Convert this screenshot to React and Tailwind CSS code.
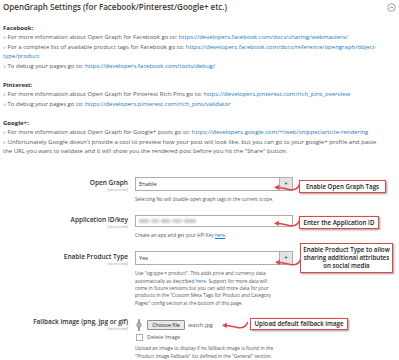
import React from 'react';

const Sel = ({ value }) => (
    <div className="flex h-[14px] w-[158px] border border-[#adadad] bg-white">
        <span className="flex-1 pl-[3px] text-[5.6px] leading-[12px] text-[#303030]">{value}</span>
        <span className="flex w-[13px] items-center justify-center border-l border-[#adadad] bg-[#e3e3e3] text-[4px] text-[#41362f]">▼</span>
    </div>
);

const Label = ({ title, className }) => (
    <div className={`w-[128px] shrink-0 text-right ${className}`}>
        <div className="text-[6.5px] font-semibold leading-[8px] text-[#303030] whitespace-nowrap">{title}</div>
        <div className="text-[3.8px] leading-[5px] text-[#999]">[store view]</div>
    </div>
);

const Callout = ({ className, children }) => (
    <div className={`absolute flex items-center justify-center border-[1.5px] border-[#e0454a] bg-white text-center text-[6.2px] font-semibold leading-[8px] text-[#222] shadow-[1px_1px_2px_rgba(0,0,0,0.4)] ${className}`}>
        {children}
    </div>
);

const Arrow = ({ className }) => (
    <svg className={`absolute ${className}`} width="26" height="9" viewBox="0 0 26 9">
        <path d="M25.5 1.5 C24 5.5, 20 7.5, 15 6.5 C11 5.8, 7 4.5, 4 4.5" fill="none" stroke="#e0454a" strokeWidth="1.5" strokeLinecap="round" />
        <polygon points="0,4.3 5,1.8 4.7,7" fill="#e0454a" />
    </svg>
);

const A = ({ children }) => <span className="text-[#1979c3]">{children}</span>;
const B = () => <span className="text-[#999]">» </span>;

export default function App() {
    return (
        <div className="relative h-[360px] w-[399px] overflow-hidden bg-white font-['Open_Sans',sans-serif]">
            {/* header */}
            <div className="flex items-center justify-between px-[3px] pt-[1px]">
                <h1 className="text-[8px] font-semibold leading-[12px] text-[#41362f]">
                    OpenGraph Settings (for Facebook/Pinterest/Google+ etc.)
                </h1>
                <svg width="9" height="9" viewBox="0 0 9 9" className="mr-[0px]">
                    <circle cx="4.5" cy="4.5" r="3.8" fill="none" stroke="#8a8a8a" strokeWidth="0.8" />
                    <path d="M2.8 5.4 L4.5 3.6 L6.2 5.4" fill="none" stroke="#6a6a6a" strokeWidth="0.8" />
                </svg>
            </div>

            {/* info text */}
            <div className="mt-[10.75px] pl-[3px] text-[6px] leading-[9.5px] text-[#555] whitespace-nowrap">
                <div className="font-bold text-[#303030]">Facebook:</div>
                <div><B />For more information about Open Graph for Facebook go to: <A>https://developers.facebook.com/docs/sharing/webmasters/</A></div>
                <div><B />For a complete list of available product tags for Facebook go to: <A>https://developers.facebook.com/docs/reference/opengraph/object-</A></div>
                <div><A>type/product</A></div>
                <div><B />To debug your pages go to: <A>https://developers.facebook.com/tools/debug/</A></div>
                <div className="h-[9.5px]" />
                <div className="font-bold text-[#303030]">Pinterest:</div>
                <div><B />For more information about Open Graph for Pinterest Rich Pins go to: <A>https://developers.pinterest.com/rich_pins_overview</A></div>
                <div><B />To debug your pages go to: <A>https://developers.pinterest.com/rich_pins/validator</A></div>
                <div className="h-[9.5px]" />
                <div className="font-bold text-[#303030]">Google+:</div>
                <div><B />For more information about Open Graph for Google+ posts go to: <A>https://developers.google.com/+/web/snippet/article-rendering</A></div>
                <div><B />Unfortunately Google doesn't provide a tool to preview how your post will look like, but you can go to your google+ profile and paste</div>
                <div>the URL you want to validate and it will show you the rendered post before you hit the "Share" button.</div>
            </div>

            {/* form */}
            <div className="mt-[20.25px] text-[#555]">
                <div className="flex">
                    <Label title="Open Graph" className="pt-[2px]" />
                    <div className="ml-[7px] w-[158px]">
                        <Sel value="Enable" />
                        <p className="mt-[4.5px] text-[4.8px] leading-[7.3px] whitespace-nowrap">Selecting No will disable open graph tags in the current scope.</p>
                    </div>
                </div>

                <div className="mt-[12.2px] flex">
                    <Label title="Application ID/key" className="pt-[1px]" />
                    <div className="ml-[7px] w-[158px]">
                        <div className="flex h-[12px] items-center gap-[2px] border border-[#adadad] bg-white pl-[3px]">
                            <span className="h-[4px] w-[10px] rounded-[1px] bg-[#c9c9c9] blur-[1px]" />
                            <span className="h-[4px] w-[8px] rounded-[1px] bg-[#cfcfcf] blur-[1px]" />
                            <span className="h-[4px] w-[9px] rounded-[1px] bg-[#c9c9c9] blur-[1px]" />
                            <span className="h-[4px] w-[10px] rounded-[1px] bg-[#cfcfcf] blur-[1px]" />
                            <span className="h-[4px] w-[12px] rounded-[1px] bg-[#c9c9c9] blur-[1px]" />
                        </div>
                        <p className="mt-[5.5px] text-[4.8px] leading-[7px] whitespace-nowrap">
                            Create an app and get your API Key <span className="text-[#1979c3] underline">here</span>.
                        </p>
                    </div>
                </div>

                <div className="mt-[11.5px] flex">
                    <Label title="Enable Product Type" className="pt-[2px]" />
                    <div className="ml-[7px] w-[158px]">
                        <Sel value="Yes" />
                        <p className="mt-[5.5px] text-[4.8px] leading-[7.3px] whitespace-nowrap">
                            Use "og:type = product". This adds price and currency data<br />
                            automatically as described <span className="text-[#1979c3]">here</span>. Support for more data will<br />
                            come in future versions but you can add more data for your<br />
                            products in the "Custom Meta Tags for Product and Category<br />
                            Pages" config section at the bottom of this page.
                        </p>
                    </div>
                </div>

                <div className="mt-[13px] flex">
                    <Label title="Fallback image (png, jpg or gif)" className="-mt-[2px]" />
                    <div className="ml-[7px] w-[200px]">
                        <div className="flex h-[10px] items-center">
                            <svg width="10" height="12" viewBox="0 0 10 12" className="-ml-[1px] mr-[3px]">
                                <rect x="4" y="0" width="2" height="12" rx="0.8" fill="#9a9a9a" />
                                <circle cx="5" cy="6" r="2.3" fill="#b5b5b5" stroke="#7d7d7d" strokeWidth="0.6" />
                            </svg>
                            <span className="flex h-[10px] w-[38px] items-center justify-center rounded-[1px] border border-[#8f8f8f] bg-[#e9e9e9] text-[5.4px] text-[#222]">Choose file</span>
                            <span className="ml-[3px] text-[5.6px] text-[#555]">watch.jpg</span>
                        </div>
                        <div className="mt-[4px] flex h-[7px] items-center">
                            <span className="ml-[1px] h-[7px] w-[7px] border border-[#adadad] bg-white" />
                            <span className="ml-[4px] text-[5.4px] text-[#555]">Delete Image</span>
                        </div>
                        <p className="mt-[3px] text-[4.8px] leading-[8px] whitespace-nowrap">
                            Upload an image to display if no fallback image is found in the<br />
                            "Product Image Fallback" list defined in the "General" section.
                        </p>
                    </div>
                </div>
            </div>

            {/* annotations */}
            <Arrow className="left-[274px] top-[183px]" />
            <Callout className="left-[299px] top-[180px] h-[13px] w-[87px]">Enable Open Graph Tags</Callout>

            <Arrow className="left-[274px] top-[219px]" />
            <Callout className="left-[299px] top-[216px] h-[13px] w-[80px]">Enter the Application ID</Callout>

            <Arrow className="left-[275px] top-[258px]" />
            <Callout className="left-[300px] top-[243px] h-[30px] w-[93px]">
                Enable Product Type to allow<br />sharing additional attributes<br />on social media
            </Callout>

            <Arrow className="left-[222px] top-[321px]" />
            <Callout className="left-[250px] top-[318px] h-[12px] w-[98px]">Upload default fallback image</Callout>
        </div>
    );
}
